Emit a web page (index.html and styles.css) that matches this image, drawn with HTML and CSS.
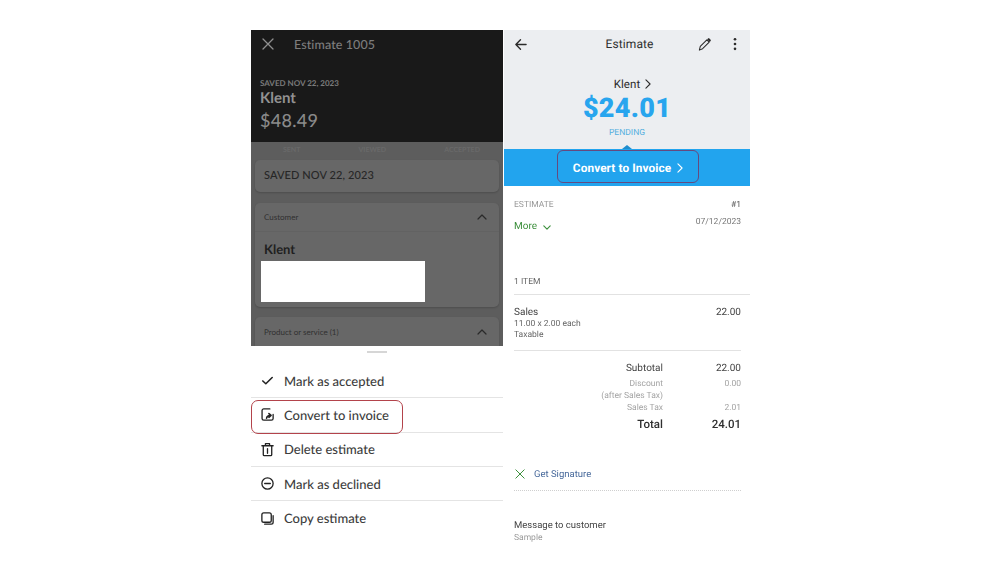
FILE: index.html
```html
<!DOCTYPE html>
<html lang="en">
<head>
<meta charset="utf-8">
<title>Convert estimate to invoice</title>
<link rel="stylesheet" href="styles.css">
</head>
<body>
<main class="stage">
  <section class="phone-left">
    <header class="dark-head">
      <div class="title-row">
        <svg class="close-icon" viewBox="0 0 12 12"><path d="M1 1l10 10M11 1L1 11"/></svg>
        <span class="title">Estimate 1005</span>
      </div>
      <div class="saved">SAVED NOV 22, 2023</div>
      <div class="client">Klent</div>
      <div class="amount">$48.49</div>
    </header>
    <div class="dim-body">
      <div class="steps"><span>SENT</span><span>VIEWED</span><span>ACCEPTED</span></div>
      <div class="card status-card">SAVED NOV 22, 2023</div>
      <div class="card customer-card">
        <div class="card-head">
          <span>Customer</span>
          <svg class="caret" viewBox="0 0 10 6"><path d="M1 5l4-4 4 4"/></svg>
        </div>
        <div class="customer-name">Klent</div>
        <div class="redaction"></div>
      </div>
      <div class="card product-card">
        <div class="card-head">
          <span>Product or service (1)</span>
          <svg class="caret" viewBox="0 0 10 6"><path d="M1 5l4-4 4 4"/></svg>
        </div>
      </div>
    </div>
    <div class="sheet">
      <div class="grabber"></div>
      <ul class="menu">
        <li class="menu-item">
          <svg class="menu-icon" viewBox="0 0 16 16"><path class="bold" d="M3 8.500l3.200 3L13 4.800"/></svg>
          <span>Mark as accepted</span>
        </li>
        <li class="menu-item highlighted">
          <svg class="menu-icon" viewBox="0 0 16 16"><path d="M10.500 2H4A1.800 1.800 0 0 0 2.200 3.800v8.400A1.800 1.800 0 0 0 4 14h8.200a1.800 1.800 0 0 0 1.800-1.800V8"/><path class="bold" d="M7 12c.2-2 1.300-3 3.800-3M9.500 7l2.300 2-2.300 2"/></svg>
          <span>Convert to invoice</span>
        </li>
        <li class="menu-item">
          <svg class="menu-icon" viewBox="0 0 16 16"><path d="M2 4h12M5.800 4V1.800h4.400V4M3.500 4v9.500a1 1 0 0 0 1 1h7a1 1 0 0 0 1-1V4M8 7v5"/></svg>
          <span>Delete estimate</span>
        </li>
        <li class="menu-item">
          <svg class="menu-icon" viewBox="0 0 16 16"><circle cx="8" cy="8" r="6"/><path d="M5 8h6"/></svg>
          <span>Mark as declined</span>
        </li>
        <li class="menu-item">
          <svg class="menu-icon" viewBox="0 0 16 16"><rect x="2" y="2" width="10" height="10" rx="2"/><path d="M14 5v7a2 2 0 0 1-2 2H5"/></svg>
          <span>Copy estimate</span>
        </li>
      </ul>
    </div>
  </section>

  <section class="phone-right">
    <header class="summary">
      <div class="nav">
        <svg class="nav-icon back" viewBox="0 0 14 14"><path d="M13 7H2M7 2L2 7l5 5"/></svg>
        <span class="nav-title">Estimate</span>
        <svg class="nav-icon pencil" viewBox="0 0 16 16"><path d="M3.500 10L10.500 3l2.500 2.500-7 7L2.500 14z"/><path class="fill" d="M10.800 2.500l1-1a1 1 0 0 1 1.400 0l1.300 1.300a1 1 0 0 1 0 1.400l-1 1z"/></svg>
        <svg class="nav-icon dots" viewBox="0 0 4 16"><circle cx="2" cy="2.500" r="1.500"/><circle cx="2" cy="8" r="1.500"/><circle cx="2" cy="13.500" r="1.500"/></svg>
      </div>
      <div class="payee">Klent <svg class="chev dark" viewBox="0 0 7 12"><path d="M1 1l5 5-5 5"/></svg></div>
      <div class="total-big">$24.01</div>
      <div class="pending">PENDING</div>
    </header>
    <div class="convert-band">
      <span class="band-notch"></span>
      <div class="convert-btn">Convert to Invoice <svg class="chev" viewBox="0 0 7 12"><path d="M1 1l5 5-5 5"/></svg></div>
    </div>
    <div class="doc">
      <div class="doc-meta">
        <div class="meta-left">
          <div class="label">ESTIMATE</div>
          <div class="more">More <svg class="more-caret" viewBox="0 0 10 6"><path d="M1 1l4 4 4-4"/></svg></div>
        </div>
        <div class="meta-right">
          <div class="number">#1</div>
          <div class="date">07/12/2023</div>
        </div>
      </div>
      <div class="items-label">1 ITEM</div>
      <div class="line-item">
        <div>
          <div class="item-name">Sales</div>
          <div class="item-sub">11.00 x 2.00 each</div>
          <div class="item-sub">Taxable</div>
        </div>
        <div class="item-name">22.00</div>
      </div>
      <div class="totals">
        <div class="t-row main"><span>Subtotal</span><span>22.00</span></div>
        <div class="t-row faint first"><span>Discount<br>(after Sales Tax)</span><span>0.00</span></div>
        <div class="t-row faint"><span>Sales Tax</span><span>2.01</span></div>
        <div class="t-row grand"><span>Total</span><span>24.01</span></div>
      </div>
      <div class="signature">
        <svg class="sig-x" viewBox="0 0 12 12"><path d="M1 1l10 10M11 1L1 11"/></svg>
        <span>Get Signature</span>
      </div>
      <div class="message">
        <div class="msg-title">Message to customer</div>
        <div class="msg-body">Sample</div>
      </div>
    </div>
  </section>
</main>
</body>
</html>
```
FILE: styles.css
```css
* { box-sizing: border-box; }
html, body { margin: 0; padding: 0; background: #fff; }
body { width: 999px; height: 562px; overflow: hidden; text-rendering: geometricPrecision; }
ul { list-style: none; margin: 0; padding: 0; }
svg { display: block; fill: none; stroke-linecap: round; stroke-linejoin: round; }

.stage { display: flex; padding: 30px 0 0 251px; gap: 1px; align-items: flex-start; filter: blur(.35px); }

/* Left phone */
.phone-left { width: 252px; font-family: Lato, "Noto Sans", sans-serif; }
.dark-head { height: 112px; background: #191919; padding: 6px 0 0 9px; color: #8c8c8c; }
.title-row { display: flex; align-items: center; height: 16px; }
.close-icon { width: 12px; height: 12px; stroke: #8f8f8f; stroke-width: 1.300; margin-right: 20px; margin-left: 2px; }
.title { font-size: 12.500px; font-weight: 500; letter-spacing: .1px; color: #7d7d7d; }
.saved { font-size: 8px; font-weight: 700; margin-top: 26px; line-height: 10px; color: #7b7b7b; }
.client { font-size: 15px; font-weight: 700; line-height: 18px; margin-top: 1px; color: #929292; }
.amount { font-size: 18px; font-weight: 500; line-height: 24px; margin-top: 1px; letter-spacing: .3px; color: #8a8a8a; }

.dim-body { height: 204px; background: #5d5d5d; padding: 0 4px; overflow: hidden; }
.steps { display: flex; justify-content: space-between; height: 18px; padding: 2px 19px 0 28px; font-size: 7px; line-height: 12px; color: #696969; font-weight: 700; }
.card { background: #676767; border-radius: 5px; box-shadow: 0 1px 2px rgba(0, 0, 0, .18); color: #262626; }
.status-card { height: 32px; padding: 0 9px; font-size: 11px; font-weight: 500; line-height: 32px; letter-spacing: .1px; }
.customer-card { height: 104px; margin-top: 11px; position: relative; }
.card-head { height: 29px; display: flex; align-items: center; justify-content: space-between; padding: 0 12px 0 9px; font-size: 8px; color: #313131; border-bottom: 1px solid #626262; }
.caret { width: 10px; height: 6px; stroke: #2a2a2a; stroke-width: 1.200; }
.customer-name { font-size: 13px; font-weight: 700; line-height: 16px; padding: 9px 0 0 9px; color: #1f1f1f; }
.redaction { position: absolute; left: 6px; top: 58px; width: 164px; height: 41px; background: #fff; }
.product-card { height: 60px; margin-top: 10px; border-radius: 5px 5px 0 0; }
.product-card .card-head { border: 0; }

.sheet { background: #fff; }
.grabber { width: 20px; height: 2px; margin: 0 auto; background: #d6d6d6; position: relative; top: 5px; }
.menu { padding-top: 16px; }
.menu-item { display: flex; align-items: center; height: 34.300px; padding-left: 9px; font-size: 13px; font-weight: 500; color: #3d3d3d; border-bottom: 1px solid #e4e4e4; position: relative; }
.menu-item:last-child { border-bottom: 0; }
.menu-icon { width: 15px; height: 15px; stroke: #222; stroke-width: 1.400; margin-right: 9px; flex: none; }
.menu-icon .bold { stroke-width: 1.700; }
.highlighted::after { content: ""; position: absolute; left: 0; top: 2px; width: 150px; height: 32px; border: 1px solid #b3434b; border-radius: 7px; }

/* Right phone */
.phone-right { width: 246px; font-family: Roboto, "Liberation Sans", sans-serif; }
.summary { height: 119px; background: #eceef1; text-align: center; position: relative; }
.nav { display: flex; align-items: center; height: 28px; padding: 0 13px 0 10px; position: relative; }
.nav-icon { stroke: #2b2b2b; }
.back { width: 13px; height: 13px; stroke-width: 1.500; }
.nav-title { flex: 1; padding-left: 35px; font-size: 12px; color: #2e2e2e; letter-spacing: .1px; }
.pencil { width: 15px; height: 15px; stroke-width: 1.100; margin-right: 21px; }
.pencil .fill { fill: #2b2b2b; stroke: none; }
.dots { width: 4px; height: 14px; fill: #2b2b2b; stroke: none; }
.payee { display: flex; justify-content: center; align-items: center; gap: 5px; margin-top: 19px; padding-left: 11px; font-size: 11.500px; line-height: 14px; color: #2b2b2b; letter-spacing: .1px; }
.chev { width: 6px; height: 10px; stroke: #fff; stroke-width: 1.300; }
.chev.dark { stroke: #2b2b2b; }
.total-big { font-size: 27px; font-weight: 900; line-height: 32px; margin-top: 1px; color: #28a5ee; letter-spacing: .3px; }
.pending { font-size: 8.500px; line-height: 10px; margin-top: 4px; color: #55aedf; }
.convert-band { height: 37px; background: #22a4ee; position: relative; display: flex; justify-content: center; }
.band-notch { position: absolute; left: 118px; top: -4px; border: 5px solid transparent; border-top: 0; border-bottom: 4px solid #1f8dcd; }
.convert-btn { position: absolute; left: 53px; top: 1px; width: 142px; height: 33px; padding-top: 2px; border: 1px solid #654a80; border-radius: 6px; display: flex; align-items: center; justify-content: center; gap: 6px; color: #fff; font-size: 11.800px; font-weight: 700; letter-spacing: .1px; }

.doc { padding: 0 9px 0 10px; color: #3a3a3a; }
.doc-meta { display: flex; justify-content: space-between; height: 52px; padding-top: 14px; }
.label { font-size: 8.500px; line-height: 10px; color: #999; }
.more { display: flex; align-items: center; gap: 6px; margin-top: 11px; font-size: 10px; line-height: 12px; color: #3c8f3c; }
.more-caret { width: 8px; height: 5px; stroke: #3c8f3c; stroke-width: 1.400; }
.meta-right { text-align: right; }
.number { font-size: 8.500px; line-height: 10px; color: #555; }
.date { font-size: 8.500px; line-height: 10px; margin-top: 7px; color: #777; }
.items-label { font-size: 8.500px; line-height: 12px; margin-top: 38px; color: #666; margin-right: -9px; border-bottom: 1px solid #e2e2e2; height: 19px; }
.line-item { display: flex; justify-content: space-between; height: 56px; padding-top: 12px; border-bottom: 1px solid #e2e2e2; }
.item-name { font-size: 10px; line-height: 12px; color: #444; }
.item-sub { font-size: 8.500px; line-height: 11px; color: #666; }
.totals { padding-top: 12px; height: 115px; }
.t-row { display: flex; justify-content: flex-end; text-align: right; }
.t-row span:first-child { margin-right: 27px; }
.t-row span:last-child { width: 51px; }
.t-row.main { font-size: 10px; line-height: 12px; color: #444; }
.t-row.faint { font-size: 8.500px; line-height: 12px; color: #a3a3a3; }
.t-row.first { margin-top: 3px; }
.t-row.grand { font-size: 11.500px; font-weight: 500; line-height: 14px; margin-top: 3px; color: #2f2f2f; }
.signature { display: flex; align-items: center; gap: 9px; height: 17px; margin-left: 1px; padding-bottom: 1px; font-size: 9.500px; color: #47699b; }
.sig-x { width: 10px; height: 10px; stroke: #3c8f3c; stroke-width: 1.200; }
.message { border-top: 1px dotted #cfcfcf; margin-top: 7px; padding-top: 29px; }
.msg-title { font-size: 9.500px; line-height: 12px; color: #444; }
.msg-body { font-size: 8.500px; line-height: 12px; margin-top: 0; color: #9a9a9a; }
```
